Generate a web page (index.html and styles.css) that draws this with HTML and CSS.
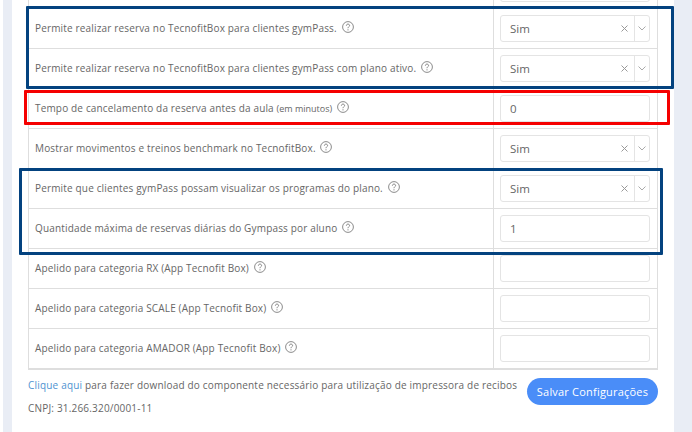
FILE: index.html
```html
<!DOCTYPE html>
<html lang="pt-BR">
<head>
<meta charset="utf-8">
<title>Configurações</title>
<link rel="stylesheet" href="styles.css">
</head>
<body>
<svg class="defs" width="0" height="0" aria-hidden="true">
  <symbol id="help" viewBox="0 0 12 12">
    <circle cx="6" cy="6" r="5.4" fill="none" stroke="currentColor" stroke-width="0.85"/>
    <path d="M4.4 4.7C4.4 3.7 5.1 3.1 6 3.1S7.6 3.7 7.6 4.6C7.6 5.6 6 5.8 6 7.2" fill="none" stroke="currentColor" stroke-width="0.9"/>
    <circle cx="6" cy="8.8" r="0.6" fill="currentColor"/>
  </symbol>
  <symbol id="times" viewBox="0 0 7 7">
    <path d="M0.5 0.5l6 6M6.5 0.5l-6 6" fill="none" stroke="currentColor" stroke-width="1"/>
  </symbol>
  <symbol id="chevron" viewBox="0 0 8 5">
    <path d="M0.5 0.5L4 4L7.5 0.5" fill="none" stroke="currentColor" stroke-width="1"/>
  </symbol>
</svg>
<main class="panel">
  <section class="table">
    <div class="row"><div class="label"></div><div class="field"><div class="input"></div></div></div>
    <div class="row"><div class="label">Permite realizar reserva no TecnofitBox para clientes gymPass. <svg class="help"><use href="#help"/></svg></div><div class="field"><div class="select"><span class="value">Sim</span><svg class="clear"><use href="#times"/></svg><span class="arrow"><svg class="chevron"><use href="#chevron"/></svg></span></div></div></div>
    <div class="row"><div class="label">Permite realizar reserva no TecnofitBox para clientes gymPass com plano ativo. <svg class="help"><use href="#help"/></svg></div><div class="field"><div class="select"><span class="value">Sim</span><svg class="clear"><use href="#times"/></svg><span class="arrow"><svg class="chevron"><use href="#chevron"/></svg></span></div></div></div>
    <div class="row"><div class="label">Tempo de cancelamento da reserva antes da aula <span class="small">(em minutos)</span> <svg class="help"><use href="#help"/></svg></div><div class="field"><div class="input">0</div></div></div>
    <div class="row"><div class="label">Mostrar movimentos e treinos benchmark no TecnofitBox. <svg class="help"><use href="#help"/></svg></div><div class="field"><div class="select"><span class="value">Sim</span><svg class="clear"><use href="#times"/></svg><span class="arrow"><svg class="chevron"><use href="#chevron"/></svg></span></div></div></div>
    <div class="row"><div class="label">Permite que clientes gymPass possam visualizar os programas do plano. <svg class="help"><use href="#help"/></svg></div><div class="field"><div class="select"><span class="value">Sim</span><svg class="clear"><use href="#times"/></svg><span class="arrow"><svg class="chevron"><use href="#chevron"/></svg></span></div></div></div>
    <div class="row"><div class="label">Quantidade máxima de reservas diárias do Gympass por aluno <svg class="help"><use href="#help"/></svg></div><div class="field"><div class="input">1</div></div></div>
    <div class="row"><div class="label">Apelido para categoria RX (App Tecnofit Box) <svg class="help"><use href="#help"/></svg></div><div class="field"><div class="input"></div></div></div>
    <div class="row"><div class="label">Apelido para categoria SCALE (App Tecnofit Box) <svg class="help"><use href="#help"/></svg></div><div class="field"><div class="input"></div></div></div>
    <div class="row"><div class="label">Apelido para categoria AMADOR (App Tecnofit Box) <svg class="help"><use href="#help"/></svg></div><div class="field"><div class="input"></div></div></div>
  </section>
  <footer class="footer">
    <div class="notes">
      <p class="note"><a class="link" href="#">Clique aqui</a> para fazer download do componente necessário para utilização de impressora de recibos</p>
      <p class="note">CNPJ: 31.266.320/0001-11</p>
    </div>
    <button class="save" type="button">Salvar Configurações</button>
  </footer>
</main>
<div class="mark blue one"></div>
<div class="mark red two"></div>
<div class="mark blue three"></div>
</body>
</html>
```

FILE: styles.css
```css
* { box-sizing: border-box; }
body {
  margin: 0;
  width: 692px;
  height: 432px;
  overflow: hidden;
  position: relative;
  background: #e9edf5;
  font-family: "Open Sans", sans-serif;
  font-size: 10px;
  color: #666;
  border-left: 3px solid #fff;
  padding-left: 9px;
}
.defs { position: absolute; }
.panel {
  width: 662px;
  height: 463px;
  margin-top: -31px;
  padding: 0 16px;
  background: #fff;
}
.table {
  border: 1px solid #dedede;
  border-top: 0;
}
.row {
  display: grid;
  grid-template-columns: 464px 1fr;
  height: 40px;
  border-bottom: 1px solid #dedede;
}
.label {
  padding-left: 6px;
  line-height: 39px;
  white-space: nowrap;
  letter-spacing: 0.16px;
}
.small { font-size: 9px; letter-spacing: 0; }
.help {
  width: 12px;
  height: 12px;
  color: #777;
  margin-left: 2px;
  vertical-align: -1px;
}
.field {
  border-left: 1px solid #dedede;
  padding: 6px 7px 0 6px;
}
.select, .input {
  height: 27px;
  width: 150px;
  border: 1px solid #e4e4e4;
  border-radius: 3px;
  background: #fff;
  display: flex;
  align-items: center;
  font-size: 11.5px;
  color: #666;
}
.input { padding-left: 9px; }
.value { flex: 1; padding-left: 9px; }
.clear { width: 7px; height: 7px; color: #999; margin-right: 6px; }
.arrow {
  width: 15px;
  height: 100%;
  border-left: 1px solid #e4e4e4;
  display: flex;
  align-items: center;
  justify-content: center;
  color: #aaa;
}
.chevron { width: 8px; height: 5px; }
.footer {
  display: flex;
  justify-content: space-between;
  align-items: flex-start;
  padding-top: 8px;
}
.note {
  margin: 0 0 9px;
  font-size: 10px;
  letter-spacing: 0.19px;
  line-height: 14px;
  white-space: nowrap;
}
.link { color: #4f93d1; text-decoration: none; }
.save {
  width: 131px;
  height: 27px;
  border: 0;
  border-radius: 14px;
  background: #4a8df8;
  color: #fff;
  font-family: "Open Sans", sans-serif;
  font-size: 11px;
  letter-spacing: 0.2px;
  padding: 0;
  flex-shrink: 0;
}
.mark { position: absolute; border: 3px solid; border-radius: 1px; }
.blue { border-color: #03427f; }
.red { border-color: #f50000; }
.one { left: 23px; top: 6px; width: 648px; height: 83px; }
.two { left: 21px; top: 90px; width: 646px; height: 35px; }
.three { left: 16px; top: 168px; width: 644px; height: 87px; }
```
